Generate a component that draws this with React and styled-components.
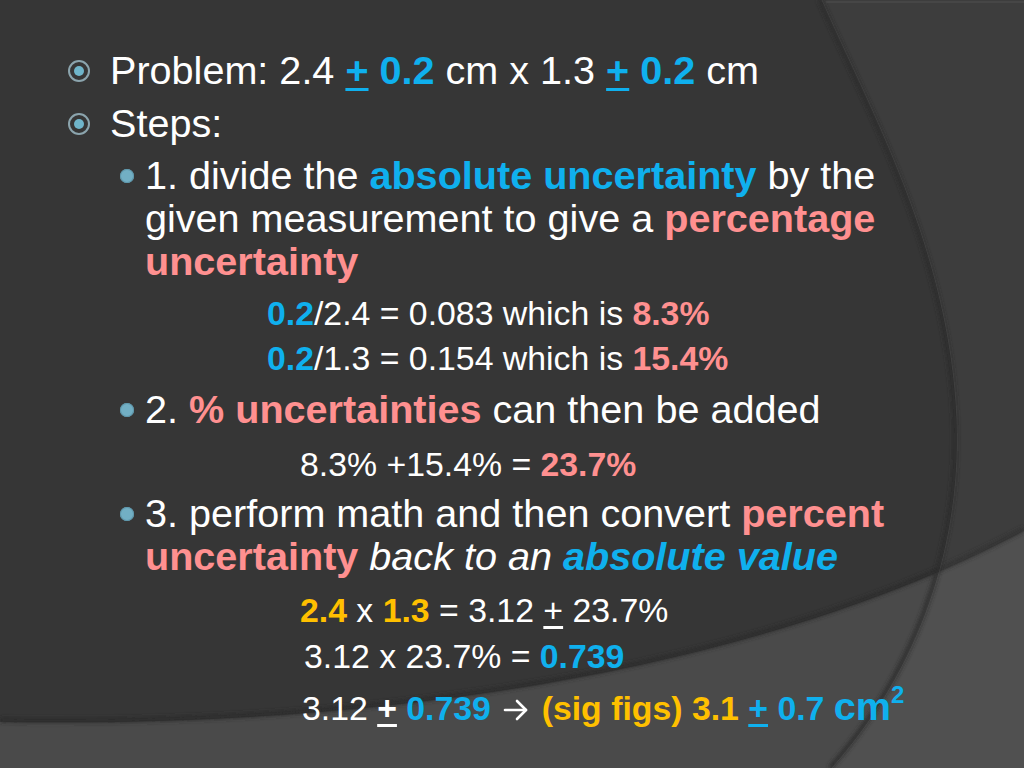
import React from 'react';
import styled, { createGlobalStyle } from 'styled-components';

const tones = {
  white: '#ffffff',
  blue: '#0fb0ee',
  pink: '#ff9090',
  gold: '#ffc000',
};

const GlobalStyle = createGlobalStyle`
  html, body {
    margin: 0;
    padding: 0;
    background: #363636;
  }
`;

const Slide = styled.div`
  position: relative;
  width: 1024px;
  height: 768px;
  overflow: hidden;
  background: #363636;
  color: #ffffff;
  font-family: 'Liberation Sans', Arial, Helvetica, sans-serif;
`;

const Backdrop = styled.svg`
  position: absolute;
  inset: 0;
  width: 100%;
  height: 100%;
`;

const Content = styled.div`
  position: relative;
  padding-top: 49px;
`;

const Point = styled.div`
  display: flex;
  align-items: flex-start;
  padding-left: ${(p) => p.$indent}px;
  margin-top: ${(p) => p.$gap || 0}px;
  font-size: 39.6px;
  line-height: 43px;
  white-space: nowrap;
`;

const Marker = styled.span`
  flex: 0 0 ${(p) => p.$width}px;
  height: 43px;
  display: flex;
  align-items: center;
`;

const Ring = styled.span`
  width: 22px;
  height: 22px;
  box-sizing: border-box;
  border-radius: 50%;
  border: 2.5px solid #8ba4ad;
  display: flex;
  align-items: center;
  justify-content: center;

  &::after {
    content: '';
    width: 10px;
    height: 10px;
    border-radius: 50%;
    background: #6fb5ca;
  }
`;

const Dot = styled.span`
  width: 14px;
  height: 14px;
  border-radius: 50%;
  background: #72afc4;
  box-shadow: inset 0 0 0 1px #5e97ab;
`;

const Formula = styled.div`
  padding-left: ${(p) => p.$indent}px;
  margin-top: ${(p) => p.$gap}px;
  font-size: 33.8px;
  line-height: 40px;
  height: 40px;
  white-space: nowrap;
`;

const Hl = styled.span`
  color: ${(p) => tones[p.$tone || 'white']};
  font-weight: ${(p) => (p.$plain ? 400 : 700)};
  font-style: ${(p) => (p.$italic ? 'italic' : 'normal')};
`;

const Pm = styled.span`
  color: ${(p) => tones[p.$tone || 'white']};
  font-weight: ${(p) => (p.$plain ? 400 : 700)};
  text-decoration: underline;
  text-decoration-thickness: 3px;
  text-underline-offset: 4px;
`;

const Big = styled.span`
  color: ${tones.blue};
  font-weight: 700;
  font-size: 39.6px;
  line-height: 0;
`;

const Sup = styled.sup`
  font-size: 24px;
  line-height: 0;
  vertical-align: 17px;
`;

const Arrow = styled.svg`
  width: 28px;
  height: 24px;
  vertical-align: -2px;
  margin: 0 2px;
`;

function ArrowGlyph() {
  return (
    <Arrow viewBox="0 0 28 24" fill="none" stroke="#ffffff" strokeWidth="2.6" strokeLinecap="round" strokeLinejoin="round">
      <path d="M3 12 H24" />
      <path d="M15 3 L24 12 L15 21" />
    </Arrow>
  );
}

function Backgrounds() {
  const arc = 'M822,0 C870,110 950,250 957,420 C962,560 910,680 832,768';
  const floor = 'M0,722 C450,730 800,650 1024,531';
  return (
    <Backdrop viewBox="0 0 1024 768" preserveAspectRatio="none">
      <defs>
        <filter id="soft" x="-10%" y="-10%" width="120%" height="120%">
          <feGaussianBlur stdDeviation="2" />
        </filter>
      </defs>
      <path d={`${floor} L1024,768 L0,768 Z`} fill="#4a4a4a" />
      <path d={floor} fill="none" stroke="#2a2a2a" strokeWidth="4" filter="url(#soft)" transform="translate(0,-2)" />
      <path d={`${arc} L1024,768 L1024,0 Z`} fill="rgba(255,255,255,0.035)" />
      <path d={arc} fill="none" stroke="#2a2a2a" strokeWidth="4" filter="url(#soft)" transform="translate(-2,0)" />
      <path d={arc} fill="none" stroke="rgba(255,255,255,0.06)" strokeWidth="1" />
      <line x1="826" y1="2" x2="1024" y2="2" stroke="rgba(255,255,255,0.05)" strokeWidth="2" />
    </Backdrop>
  );
}

export default function App() {
  return (
    <>
      <GlobalStyle />
      <Slide>
        <Backgrounds />
        <Content>
          <Point $indent={68}>
            <Marker $width={42}><Ring /></Marker>
            <div>
              Problem: 2.4 <Pm $tone="blue">+</Pm> <Hl $tone="blue">0.2</Hl> cm x 1.3{' '}
              <Pm $tone="blue">+</Pm> <Hl $tone="blue">0.2</Hl> cm
            </div>
          </Point>
          <Point $indent={68} $gap={10}>
            <Marker $width={42}><Ring /></Marker>
            <div>Steps:</div>
          </Point>

          <Point $indent={120} $gap={9}>
            <Marker $width={25}><Dot /></Marker>
            <div>
              1. divide the <Hl $tone="blue">absolute uncertainty</Hl> by the
              <br />
              given measurement to give a <Hl $tone="pink">percentage</Hl>
              <br />
              <Hl $tone="pink">uncertainty</Hl>
            </div>
          </Point>
          <Formula $indent={267} $gap={10}>
            <Hl $tone="blue">0.2</Hl>/2.4 = 0.083 which is <Hl $tone="pink">8.3%</Hl>
          </Formula>
          <Formula $indent={267} $gap={5}>
            <Hl $tone="blue">0.2</Hl>/1.3 = 0.154 which is <Hl $tone="pink">15.4%</Hl>
          </Formula>

          <Point $indent={120} $gap={10}>
            <Marker $width={25}><Dot /></Marker>
            <div>
              2. <Hl $tone="pink">% uncertainties</Hl> can then be added
            </div>
          </Point>
          <Formula $indent={300} $gap={13}>
            8.3% +15.4% = <Hl $tone="pink">23.7%</Hl>
          </Formula>

          <Point $indent={120} $gap={8}>
            <Marker $width={25}><Dot /></Marker>
            <div>
              3. perform math and then convert <Hl $tone="pink">percent</Hl>
              <br />
              <Hl $tone="pink">uncertainty</Hl> <Hl $plain $italic>back to an</Hl>{' '}
              <Hl $tone="blue" $italic>absolute value</Hl>
            </div>
          </Point>
          <Formula $indent={300} $gap={12}>
            <Hl $tone="gold">2.4</Hl> x <Hl $tone="gold">1.3</Hl> = 3.12 <Pm $plain>+</Pm> 23.7%
          </Formula>
          <Formula $indent={304} $gap={6}>
            3.12 x 23.7% = <Hl $tone="blue">0.739</Hl>
          </Formula>
          <Formula $indent={302} $gap={12}>
            3.12 <Pm>+</Pm> <Hl $tone="blue">0.739</Hl> <ArrowGlyph /> <Hl $tone="gold">(sig figs) 3.1</Hl>{' '}
            <Pm $tone="blue">+</Pm> <Hl $tone="blue">0.7</Hl>{' '}
            <Big>
              cm<Sup>2</Sup>
            </Big>
          </Formula>
        </Content>
      </Slide>
    </>
  );
}
